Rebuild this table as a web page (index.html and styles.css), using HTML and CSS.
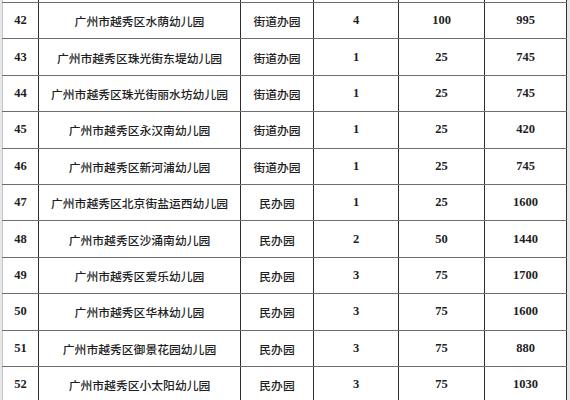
FILE: index.html
```html
<!DOCTYPE html>
<html lang="zh">
<head>
<meta charset="utf-8">
<link rel="stylesheet" href="styles.css">
</head>
<body>
<table class="grid">
  <colgroup>
    <col class="c-no"><col class="c-name"><col class="c-type"><col class="c-cls"><col class="c-seat"><col class="c-fee">
  </colgroup>
  <tr class="cut"><td></td><td></td><td></td><td></td><td></td><td></td></tr>
  <tr><td class="num">42</td><td class="zh">广州市越秀区水荫幼儿园</td><td class="zh">街道办园</td><td class="num">4</td><td class="num">100</td><td class="num">995</td></tr>
  <tr><td class="num">43</td><td class="zh">广州市越秀区珠光街东堤幼儿园</td><td class="zh">街道办园</td><td class="num">1</td><td class="num">25</td><td class="num">745</td></tr>
  <tr><td class="num">44</td><td class="zh">广州市越秀区珠光街丽水坊幼儿园</td><td class="zh">街道办园</td><td class="num">1</td><td class="num">25</td><td class="num">745</td></tr>
  <tr><td class="num">45</td><td class="zh">广州市越秀区永汉南幼儿园</td><td class="zh">街道办园</td><td class="num">1</td><td class="num">25</td><td class="num">420</td></tr>
  <tr><td class="num">46</td><td class="zh">广州市越秀区新河浦幼儿园</td><td class="zh">街道办园</td><td class="num">1</td><td class="num">25</td><td class="num">745</td></tr>
  <tr><td class="num">47</td><td class="zh">广州市越秀区北京街盐运西幼儿园</td><td class="zh">民办园</td><td class="num">1</td><td class="num">25</td><td class="num">1600</td></tr>
  <tr><td class="num">48</td><td class="zh">广州市越秀区沙涌南幼儿园</td><td class="zh">民办园</td><td class="num">2</td><td class="num">50</td><td class="num">1440</td></tr>
  <tr><td class="num">49</td><td class="zh">广州市越秀区爱乐幼儿园</td><td class="zh">民办园</td><td class="num">3</td><td class="num">75</td><td class="num">1700</td></tr>
  <tr><td class="num">50</td><td class="zh">广州市越秀区华林幼儿园</td><td class="zh">民办园</td><td class="num">3</td><td class="num">75</td><td class="num">1600</td></tr>
  <tr><td class="num">51</td><td class="zh">广州市越秀区御景花园幼儿园</td><td class="zh">民办园</td><td class="num">3</td><td class="num">75</td><td class="num">880</td></tr>
  <tr><td class="num">52</td><td class="zh">广州市越秀区小太阳幼儿园</td><td class="zh">民办园</td><td class="num">3</td><td class="num">75</td><td class="num">1030</td></tr>
</table>
</body>
</html>
```
FILE: styles.css
```css
html, body {
  margin: 0;
  padding: 0;
  background: #e6e6e6;
}
body {
  padding-left: 2px;
  height: 400px;
  overflow: hidden;
}
.grid {
  border-collapse: collapse;
  table-layout: fixed;
  width: 564px;
  background: #fff;
  color: #1e1e1e;
}
.c-no { width: 36px; }
.c-name { width: 202px; }
.c-type { width: 73px; }
.c-cls { width: 85px; }
.c-seat { width: 86px; }
.c-fee { width: 82px; }
.grid td {
  border-left: 1px solid #2e2e2e;
  border-right: 1px solid #2e2e2e;
  border-top: 1px solid #6e6e6e;
  border-bottom: 1px solid #6e6e6e;
  height: 35.4px;
  padding: 0;
  text-align: center;
  vertical-align: middle;
}
.grid tr.cut td {
  height: 2px;
  border-top: none;
}
.grid td:first-child {
  border-left-color: #c8c8c8;
}
.num {
  font-family: "Liberation Serif", serif;
  font-weight: bold;
  font-size: 12.5px;
}
.zh {
  font-family: "Noto Sans CJK SC", sans-serif;
  font-weight: 500;
  font-size: 11.8px;
}
```
